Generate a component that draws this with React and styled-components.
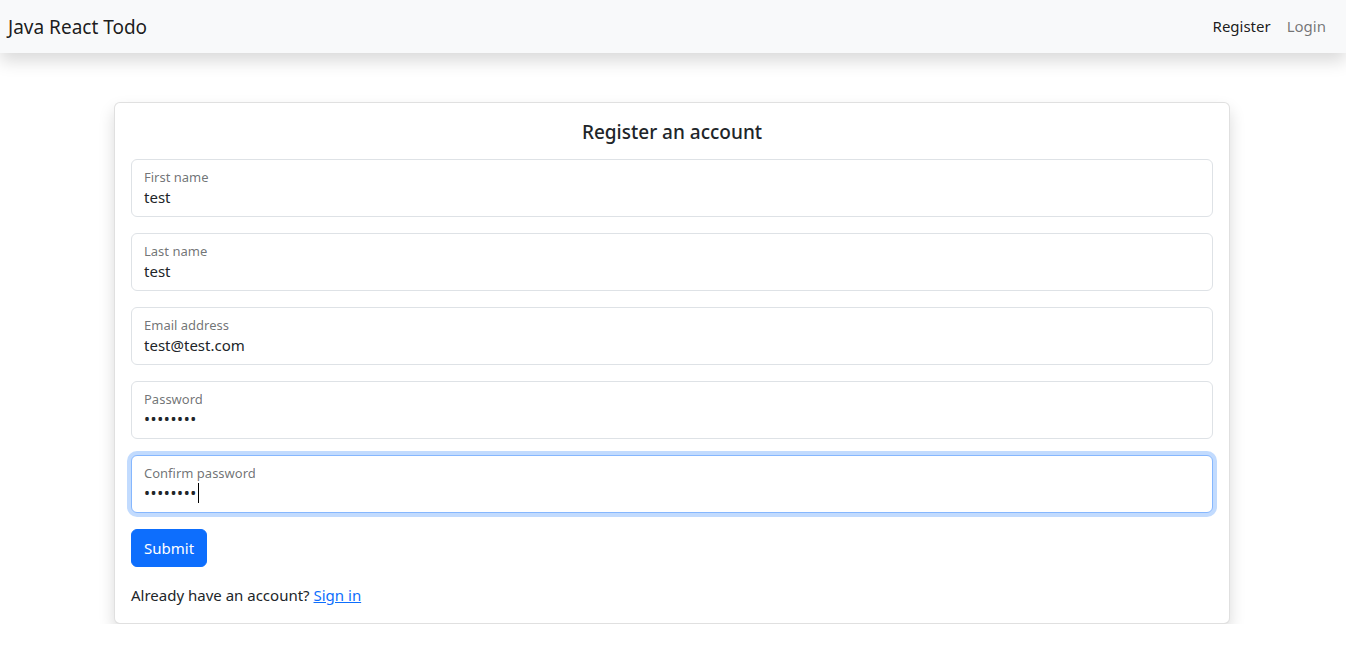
import React from 'react'
import styled, { createGlobalStyle, css } from 'styled-components'

const GlobalStyle = createGlobalStyle`
  *, *::before, *::after { box-sizing: border-box; }
  body {
    margin: 0;
    font-family: "Noto Sans", "Open Sans", sans-serif;
    font-size: 16px;
    line-height: 1.5;
    color: #212529;
    background: #fff;
  }
`

const Navbar = styled.nav`
  display: flex;
  align-items: center;
  justify-content: space-between;
  height: 53px;
  padding: 0 12px 0 8px;
  background: #f8f9fa;
  box-shadow: 0 0.5rem 1rem rgba(0, 0, 0, 0.15);
`

const Brand = styled.a`
  font-size: 19px;
  color: rgba(0, 0, 0, 0.9);
  text-decoration: none;
  line-height: 30px;
`

const NavLinks = styled.div`
  display: flex;
`

const NavLink = styled.a`
  padding: 8px;
  font-size: 15px;
  color: ${p => (p.$active ? 'rgba(0, 0, 0, 0.9)' : 'rgba(0, 0, 0, 0.55)')};
  text-decoration: none;
`

const Container = styled.main`
  max-width: 1140px;
  margin: 49px auto 0;
  padding: 0 13px 0 11px;
`

const Card = styled.div`
  background: #fff;
  border: 1px solid rgba(0, 0, 0, 0.12);
  border-radius: 6px;
  box-shadow: 0 0.5rem 1rem rgba(0, 0, 0, 0.15);
  padding: 17px 16px 16px;
`

const Title = styled.h5`
  margin: 0 0 15px;
  text-align: center;
  font-size: 19px;
  font-weight: 500;
  line-height: 24px;
`

const Field = styled.div`
  position: relative;
  height: 58px;
  margin-bottom: 16px;
  padding: 9px 12px 0;
  border: 1px solid #dee2e6;
  border-radius: 6px;
  background: #fff;
  ${p =>
    p.$focused &&
    css`
      border-color: #86b7fe;
      box-shadow: 0 0 0 4px rgba(13, 110, 253, 0.25);
    `}
`

const Label = styled.div`
  font-size: 13px;
  line-height: 16px;
  color: rgba(33, 37, 41, 0.65);
`

const Value = styled.div`
  display: flex;
  align-items: center;
  font-size: ${p => (p.$secret ? '16px' : '15px')};
  line-height: 24px;
  height: 24px;
  letter-spacing: ${p => (p.$secret ? '0.6px' : '0')};
`

const Caret = styled.span`
  display: inline-block;
  width: 1px;
  height: 20px;
  margin-left: 1px;
  background: #000;
`

const Button = styled.button`
  display: block;
  height: 38px;
  padding: 0 12px;
  border: 1px solid #0d6efd;
  border-radius: 6px;
  background: #0d6efd;
  color: #fff;
  font-family: inherit;
  font-size: 15px;
`

const Footnote = styled.p`
  margin: 17px 0 0;
  font-size: 15px;
`

const Link = styled.a`
  color: #0d6efd;
  text-decoration: underline;
`

const fields = [
  { label: 'First name', value: 'test' },
  { label: 'Last name', value: 'test' },
  { label: 'Email address', value: 'test@test.com' },
  { label: 'Password', value: '••••••••', secret: true },
  { label: 'Confirm password', value: '••••••••', secret: true, focused: true },
]

const App = () => (
  <>
    <GlobalStyle />
    <Navbar>
      <Brand href="#">Java React Todo</Brand>
      <NavLinks>
        <NavLink href="#" $active>Register</NavLink>
        <NavLink href="#">Login</NavLink>
      </NavLinks>
    </Navbar>
    <Container>
      <Card>
        <Title>Register an account</Title>
        {fields.map(f => (
          <Field key={f.label} $focused={f.focused}>
            <Label>{f.label}</Label>
            <Value $secret={f.secret}>
              {f.value}
              {f.focused && <Caret />}
            </Value>
          </Field>
        ))}
        <Button type="button">Submit</Button>
        <Footnote>
          Already have an account? <Link href="#">Sign in</Link>
        </Footnote>
      </Card>
    </Container>
  </>
)

export default App
